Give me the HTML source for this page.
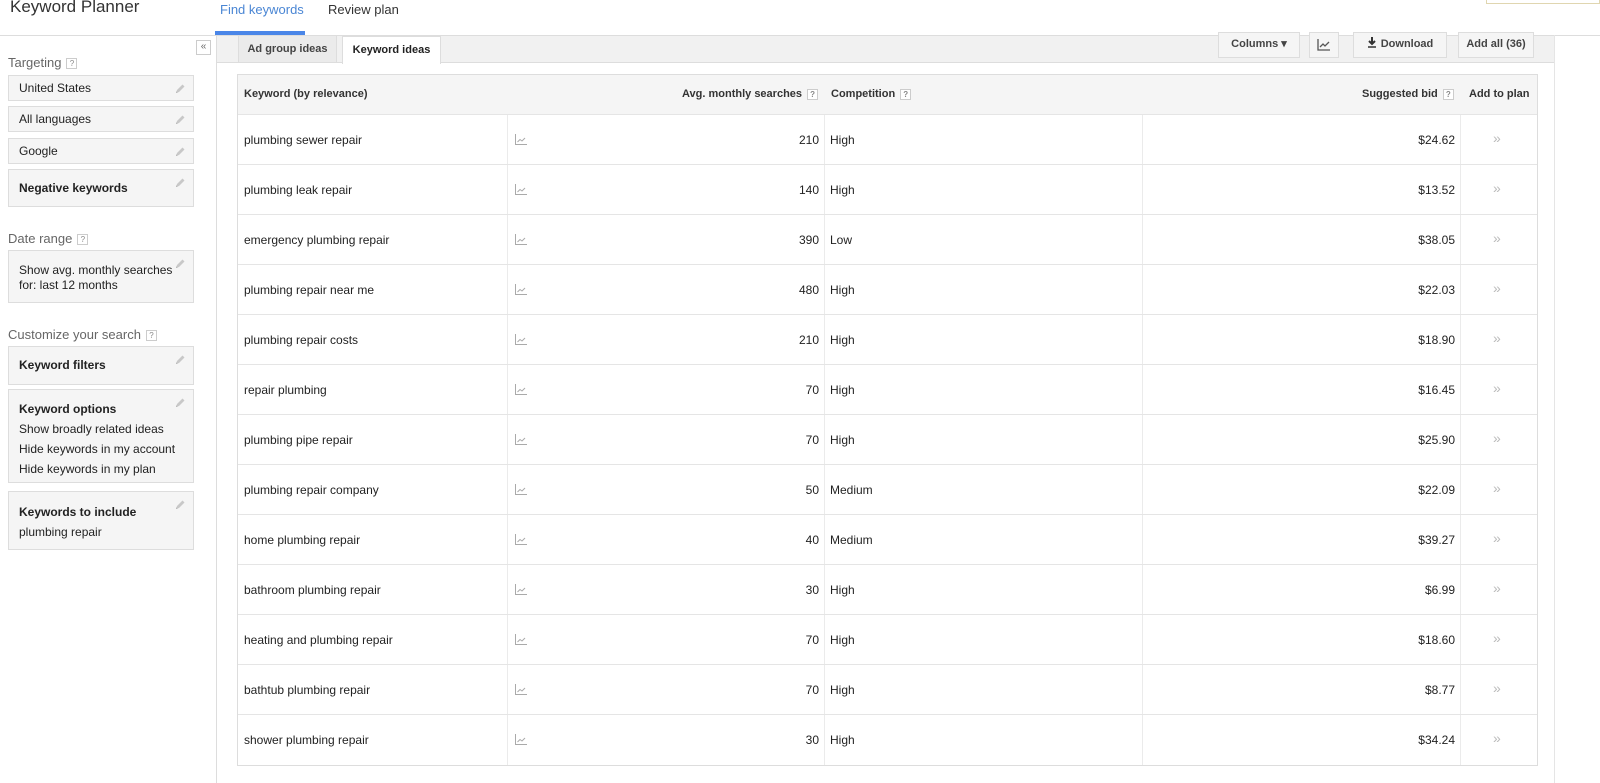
<!DOCTYPE html><html><head><style>
*{box-sizing:border-box;margin:0;padding:0}
body{width:1600px;height:783px;overflow:hidden;background:#fff;font-family:"Liberation Sans",Arial,sans-serif;font-size:12px;color:#222;position:relative}
.a{position:absolute}
.q{display:inline-block;width:11px;height:11px;border:1px solid #ccc;font-size:8px;line-height:9px;text-align:center;color:#888;vertical-align:middle;margin-left:5px;background:#fff}
.box{position:absolute;left:8px;width:186px;background:#f5f5f5;border:1px solid #ddd;padding:0 10px;font-size:12px;color:#222}
.pen{position:absolute;right:7px;top:7px;width:12px;height:12px}
.lbl{position:absolute;left:8px;font-size:13px;color:#666}
.btn{position:absolute;top:32px;height:26px;border:1px solid #ddd;background:#f5f5f5;font-size:11px;font-weight:bold;color:#444;text-align:center;line-height:23px}
.row{position:absolute;left:238px;width:1299px;height:50px;border-top:1px solid #e5e5e5;font-size:12px}
.row span{position:absolute;top:18px}
.vl{position:absolute;top:114px;height:651px;width:1px;background:#ebebeb}
</style></head><body>
<svg width="0" height="0" style="position:absolute"><defs><symbol id="pn" viewBox="0 0 12 12"><path d="M2 10L3 7L8.5 1.5L10.5 3.5L5 9Z" fill="#c8c8c8"/><path d="M2 10L2.6 8.2L3.8 9.4Z" fill="#aaa"/></symbol></defs></svg>
<div class="a" style="left:10px;top:-3px;font-size:17px;color:#333">Keyword Planner</div>
<div class="a" style="left:220px;top:2px;font-size:13px;color:#4a86d4">Find keywords</div>
<div class="a" style="left:215px;top:31px;width:90px;height:4px;background:#4a86e8"></div>
<div class="a" style="left:328px;top:2px;font-size:13px;color:#333">Review plan</div>
<div class="a" style="left:1486px;top:0;width:114px;height:4px;border:1px solid #e0d6b0;border-top:0;background:#fff"></div>
<div class="a" style="left:0;top:35px;width:1600px;height:1px;background:#ddd"></div>
<div class="a" style="left:216px;top:35px;width:1px;height:748px;background:#ddd"></div>
<div class="a" style="left:1554px;top:35px;width:1px;height:748px;background:#e5e5e5"></div>
<div class="a" style="left:196px;top:40px;width:15px;height:15px;border:1px solid #ccc;font-size:10px;line-height:12px;text-align:center;color:#666">«</div>
<div class="a" style="left:217px;top:36px;width:1337px;height:27px;background:#f1f1f1;border-bottom:1px solid #ddd"></div>
<div class="a" style="left:238px;top:36px;width:99px;height:27px;background:#ebebeb;border:1px solid #ddd;border-top:0;font-size:11px;font-weight:bold;color:#444;text-align:center;line-height:26px">Ad group ideas</div>
<div class="a" style="left:342px;top:36px;width:99px;height:28px;background:#fff;border:1px solid #ddd;border-bottom:0;font-size:11px;font-weight:bold;color:#222;text-align:center;line-height:26px">Keyword ideas</div>
<div class="btn" style="left:1218px;width:82px">Columns ▾</div>
<div class="btn" style="left:1309px;width:30px"><svg width="14" height="12" viewBox="0 0 14 12" style="margin-top:6px"><path d="M1 0V11H13M3 8L6 5L8 7L12 3" fill="none" stroke="#555" stroke-width="1.3"/></svg></div>
<div class="btn" style="left:1353px;width:94px"><svg width="10" height="11" viewBox="0 0 10 11" style="vertical-align:-1px;margin-right:4px"><path d="M5 0V6M2 4L5 7L8 4" fill="none" stroke="#333" stroke-width="2"/><path d="M1 10H9" stroke="#333" stroke-width="1.5"/></svg>Download</div>
<div class="btn" style="left:1458px;width:76px">Add all (36)</div>
<div class="lbl" style="top:55px">Targeting<span class="q">?</span></div>
<div class="box" style="top:75px;height:26px;line-height:24px">United States<svg class="pen"><use href="#pn"/></svg></div>
<div class="box" style="top:106px;height:26px;line-height:24px">All languages<svg class="pen"><use href="#pn"/></svg></div>
<div class="box" style="top:138px;height:26px;line-height:24px">Google<svg class="pen"><use href="#pn"/></svg></div>
<div class="box" style="top:169px;height:38px;line-height:36px;font-weight:bold">Negative keywords<svg class="pen"><use href="#pn"/></svg></div>
<div class="lbl" style="top:231px">Date range<span class="q">?</span></div>
<div class="box" style="top:250px;height:53px;padding-top:12px;line-height:15px">Show avg. monthly searches<br>for: last 12 months<svg class="pen"><use href="#pn"/></svg></div>
<div class="lbl" style="top:327px">Customize your search<span class="q">?</span></div>
<div class="box" style="top:346px;height:39px;line-height:37px;font-weight:bold">Keyword filters<svg class="pen"><use href="#pn"/></svg></div>
<div class="box" style="top:389px;height:94px;padding-top:9px;line-height:20px"><b>Keyword options</b><br>Show broadly related ideas<br>Hide keywords in my account<br>Hide keywords in my plan<svg class="pen"><use href="#pn"/></svg></div>
<div class="box" style="top:491px;height:59px;padding-top:10px;line-height:20px"><b>Keywords to include</b><br>plumbing repair<svg class="pen"><use href="#pn"/></svg></div>
<div class="a" style="left:237px;top:74px;width:1301px;height:692px;border:1px solid #ddd"></div>
<div class="a" style="left:238px;top:75px;width:1299px;height:39px;background:#f5f5f5;font-size:11px;font-weight:bold;color:#333">
<span class="a" style="left:6px;top:13px">Keyword (by relevance)</span>
<span class="a" style="left:444px;top:13px">Avg. monthly searches<span class="q">?</span></span>
<span class="a" style="left:593px;top:13px">Competition<span class="q">?</span></span>
<span class="a" style="left:1124px;top:13px">Suggested bid<span class="q">?</span></span>
<span class="a" style="left:1231px;top:13px">Add to plan</span>
</div>
<div class="vl" style="left:507px"></div><div class="vl" style="left:824px"></div><div class="vl" style="left:1142px"></div><div class="vl" style="left:1460px"></div>
<div id="rows"></div>
<script>
var d=[["plumbing sewer repair",210,"High","$24.62"],["plumbing leak repair",140,"High","$13.52"],["emergency plumbing repair",390,"Low","$38.05"],["plumbing repair near me",480,"High","$22.03"],["plumbing repair costs",210,"High","$18.90"],["repair plumbing",70,"High","$16.45"],["plumbing pipe repair",70,"High","$25.90"],["plumbing repair company",50,"Medium","$22.09"],["home plumbing repair",40,"Medium","$39.27"],["bathroom plumbing repair",30,"High","$6.99"],["heating and plumbing repair",70,"High","$18.60"],["bathtub plumbing repair",70,"High","$8.77"],["shower plumbing repair",30,"High","$34.24"]];
var h="";d.forEach(function(r,i){h+='<div class="row" style="top:'+(114+i*50)+'px"><span style="left:6px">'+r[0]+'</span><span style="left:277px;top:19px"><svg width="12" height="11" viewBox="0 0 12 11"><path d="M0.5 0V10.5H12M2.5 8L5 5.5L7 7L10 4" fill="none" stroke="#aaa" stroke-width="1"/></svg></span><span style="right:718px">'+r[1]+'</span><span style="left:592px">'+r[2]+'</span><span style="right:82px">'+r[3]+'</span><span style="left:1255px;top:15px;color:#bbb;font-size:14px">»</span></div>'});
document.getElementById("rows").innerHTML=h;
</script>
</body></html>
